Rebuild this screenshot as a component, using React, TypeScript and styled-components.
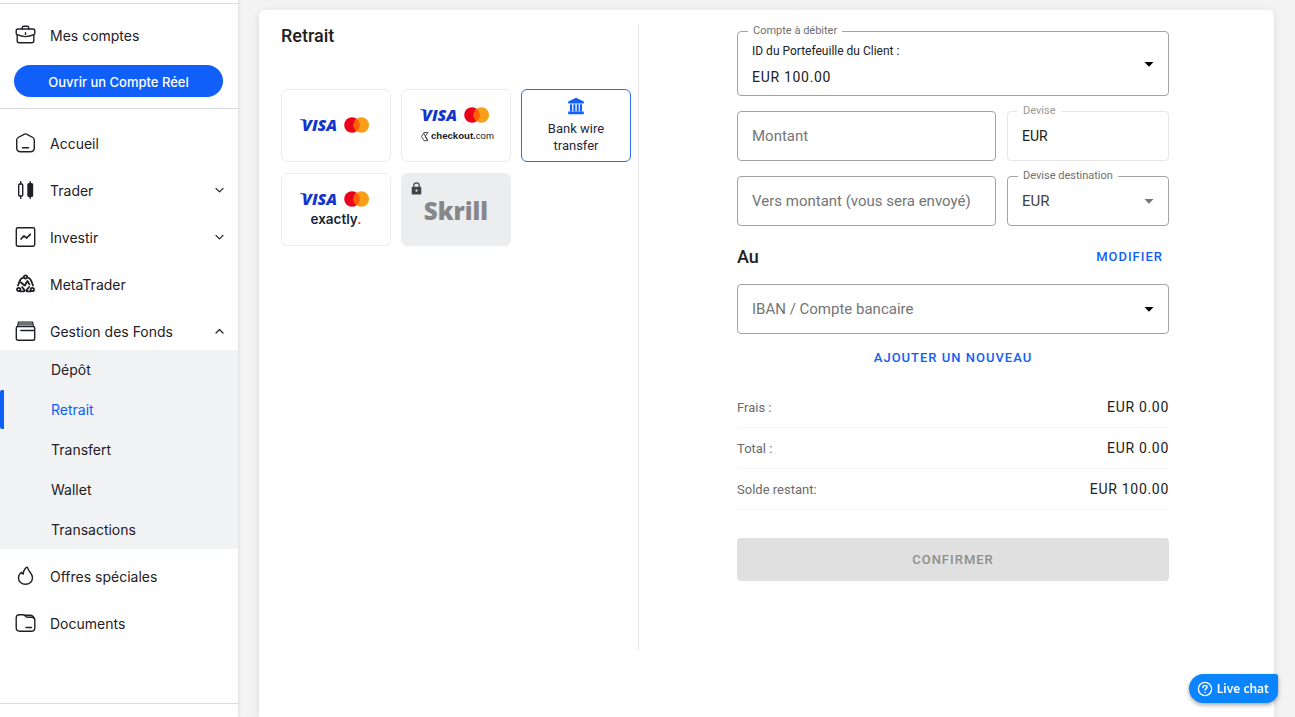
import React from "react";
import styled, { createGlobalStyle, css } from "styled-components";

const GlobalStyle = createGlobalStyle`
  *, *::before, *::after { box-sizing: border-box; }
  body {
    margin: 0;
    background: #f3f3f4;
    color: #212121;
    font-family: Roboto, "Liberation Sans", sans-serif;
    font-size: 14px;
  }
  button, input, select { font: inherit; color: inherit; }
  button { cursor: pointer; }
  ul { list-style: none; margin: 0; padding: 0; }
`;

const Page = styled.div`
  display: flex;
  min-height: 100vh;
`;

/* ---------- Sidebar ---------- */

const Sidebar = styled.aside`
  flex: 0 0 238px;
  display: flex;
  flex-direction: column;
  padding-top: 3px;
  background: #fff;
  box-shadow: 0 0 4px rgba(0, 0, 0, 0.14);
  color: #1f2025;
  font-family: Inter, "Liberation Sans", sans-serif;
`;

const AccountPanel = styled.section`
  display: flex;
  flex-direction: column;
  gap: 11px;
  padding: 12px 0 11px;
  border-top: 1px solid #dcdcde;
  border-bottom: 1px solid #d9dade;
`;

const NavLink = styled.a`
  display: flex;
  align-items: center;
  height: 38px;
  padding: 0 12px 0 15px;
  gap: 14px;
  color: inherit;
  font-size: 14px;
  text-decoration: none;

  span { flex: 1; }
`;

const OpenAccountButton = styled.button`
  height: 32px;
  margin: 0 15px 0 14px;
  padding: 2px 0 0;
  border: 0;
  border-radius: 16px;
  background: #0f5ff8;
  color: #fff;
  font-size: 13px;
  font-weight: 500;
`;

const Nav = styled.nav`
  flex: 1;
  display: flex;
  flex-direction: column;
  gap: 8px;
  padding-top: 15px;
`;

const NavList = styled.ul`
  display: flex;
  flex-direction: column;
  gap: 9px;
`;

const SubList = styled.ul`
  display: flex;
  flex-direction: column;
  gap: 1px;
  background: #f1f2f4;
`;

const SubLink = styled.a<{ $active?: boolean }>`
  display: flex;
  align-items: center;
  height: 39px;
  padding-left: 47px;
  border-left: 4px solid transparent;
  color: inherit;
  font-size: 14px;
  text-decoration: none;
  ${(p) =>
    p.$active &&
    css`
      border-left-color: #0f5ff8;
      border-radius: 2px;
      color: #0f5ff8;
    `}
`;

const SidebarFooter = styled.footer`
  height: 14px;
  border-top: 1px solid #d9dade;
`;

/* ---------- Main card ---------- */

const Main = styled.main`
  flex: 1;
  display: flex;
  min-width: 0;
  padding: 10px 21px 0;
`;

const Card = styled.div`
  flex: 1;
  display: flex;
  align-items: flex-start;
  min-width: 0;
  border-radius: 6px 6px 0 0;
  background: #fff;
  box-shadow: 0 2px 8px rgba(0, 0, 0, 0.1);
`;

const Methods = styled.section`
  flex: 0 0 380px;
  min-height: 626px;
  margin-top: 14px;
  padding: 0 7px 0 22px;
  border-right: 1px solid #e6e6e8;
`;

const Title = styled.h1`
  margin: 0 0 41px;
  font-size: 18px;
  font-weight: 500;
  line-height: 24px;
`;

const TileGrid = styled.div`
  display: grid;
  grid-template-columns: repeat(3, 1fr);
  gap: 11px 10px;
`;

const Tile = styled.button<{ $selected?: boolean }>`
  position: relative;
  display: flex;
  flex-direction: column;
  align-items: center;
  justify-content: center;
  height: 73px;
  padding: 0;
  border: 1px solid ${(p) => (p.$selected ? "#2b6cf3" : "#ececee")};
  border-radius: 6px;
  background: #fff;
  color: #25283a;
  font-size: 13px;
  line-height: 17px;

  &:disabled {
    border-color: #ecedef;
    background: #ecedef;
    cursor: default;
  }
`;

const TileText = styled.span`
  width: 70px;
  margin-top: 5px;
`;

const LockBadge = styled.span`
  position: absolute;
  top: 8px;
  left: 9px;
  display: flex;
`;

/* ---------- Form ---------- */

const FormArea = styled.section`
  flex: 1;
  display: flex;
  justify-content: center;
  min-width: 0;
  padding: 21px 7px 32px 0;
`;

const Form = styled.form`
  flex: 0 1 432px;
  min-width: 0;
`;

const FieldGrid = styled.div`
  display: grid;
  grid-template-columns: minmax(0, 1fr) 162px;
  gap: 15px 11px;
`;

const Field = styled.div<{ $wide?: boolean; $tall?: boolean; $muted?: boolean }>`
  position: relative;
  display: flex;
  height: ${(p) => (p.$tall ? 65 : 50)}px;
  border: 1px solid ${(p) => (p.$muted ? "#e6e6e6" : "#a3a3a3")};
  border-radius: 4px;
  ${(p) => p.$wide && "grid-column: 1 / -1;"}
`;

const FloatingLabel = styled.label<{ $muted?: boolean }>`
  position: absolute;
  top: -8px;
  left: 10px;
  padding: 0 5px;
  background: #fff;
  color: ${(p) => (p.$muted ? "#999" : "#6f6f6f")};
  font-size: 11px;
  line-height: 14px;
`;

const control = css`
  flex: 1;
  width: 100%;
  min-width: 0;
  padding: 0 14px 1px;
  border: 0;
  border-radius: 4px;
  background: transparent;
`;

const TextInput = styled.input`
  ${control}
  font-size: 15px;

  &::placeholder { color: #757575; opacity: 1; }
`;

const CodeInput = styled.input`
  ${control}
  color: #212121;
`;

const Select = styled.select<{ $placeholder?: boolean }>`
  ${control}
  appearance: none;
  color: ${(p) => (p.$placeholder ? "#757575" : "#424242")};
  font-size: 15px;
`;

const WalletButton = styled.button`
  ${control}
  display: flex;
  flex-direction: column;
  align-items: flex-start;
  justify-content: center;
  gap: 9px;
  padding-top: 2px;
  text-align: left;
`;

const WalletCaption = styled.span`
  font-size: 12px;
  line-height: 16px;
`;

const Amount = styled.span`
  color: #212121;
  font-size: 14px;
  line-height: 18px;
  letter-spacing: 0.05em;
`;

const Arrow = styled.span<{ $soft?: boolean }>`
  position: absolute;
  top: 0;
  right: 12px;
  bottom: 0;
  display: flex;
  align-items: center;
  color: ${(p) => (p.$soft ? "#757575" : "#000")};
  pointer-events: none;
`;

const SectionHead = styled.div`
  display: flex;
  align-items: center;
  justify-content: space-between;
  height: 32px;
  margin: 14px 0 12px;
`;

const SectionTitle = styled.h2`
  margin: 0;
  font-size: 18px;
  font-weight: 500;
`;

const TextButton = styled.button`
  height: 32px;
  padding: 0 6px;
  border: 0;
  background: transparent;
  color: #0f5ff8;
  font-size: 13px;
  font-weight: 500;
  letter-spacing: 1px;
`;

const AddRow = styled.div`
  display: flex;
  justify-content: center;
  margin: 7px 0 14px;
`;

const Summary = styled.dl`
  margin: 0 0 28px;
`;

const SummaryRow = styled.div`
  display: flex;
  align-items: center;
  justify-content: space-between;
  height: 41px;
  border-bottom: 1px solid #f5f5f5;

  dt { color: #6b6b6b; font-size: 13px; }
  dd { margin: 0; }
`;

const ConfirmButton = styled.button`
  width: 100%;
  height: 43px;
  border: 0;
  border-radius: 4px;
  background: #e0e0e0;
  color: #8f8f8f;
  font-size: 13px;
  font-weight: 500;
  letter-spacing: 1px;
`;

const ChatButton = styled.button`
  position: fixed;
  right: 17px;
  bottom: 14px;
  display: flex;
  align-items: center;
  gap: 4px;
  height: 29px;
  padding: 0 9px 0 8px;
  border: 0;
  border-radius: 15px 2px 12px 15px;
  background: #0a84ff;
  box-shadow: 0 2px 4px rgba(0, 0, 0, 0.35);
  color: #fff;
  font-family: "Noto Sans", sans-serif;
  font-size: 12px;
  font-weight: 600;
`;

/* ---------- Icons ---------- */

const LineSvg = styled.svg`
  flex: none;
  width: 21px;
  height: 22px;
  fill: none;
  stroke: #1f2025;
  stroke-width: 1.4;
  stroke-linecap: round;
  stroke-linejoin: round;
`;

const Icon = ({ children }: { children: React.ReactNode }) => (
  <LineSvg viewBox="0 0 21 22" aria-hidden="true">{children}</LineSvg>
);

const BriefcaseIcon = () => (
  <Icon>
    <path d="M7.2 5V3.8q0-1.6 1.6-1.6h3.4q1.6 0 1.6 1.6V5" />
    <path d="M3 5h15q1.8 0 1.8 1.8v2.4q0 1-1 1.5Q10.500 14.500 2.200 10.700q-1-.5-1-1.500V6.800Q1.200 5 3 5z" />
    <path d="M2.200 11v5.800q0 2 2 2h12.600q2 0 2-2V11M10.500 8.800v1.600" />
  </Icon>
);

const HomeIcon = () => (
  <Icon>
    <path d="M9 2.300 3.200 5.500Q1.700 6.400 1.700 8.200v7.600q0 4 4 4h9.600q4 0 4-4V8.200q0-1.800-1.500-2.700L12 2.300q-1.500-.8-3 0zM7.500 15.700h6" />
  </Icon>
);

const CandlesIcon = () => (
  <Icon>
    <rect x="3.700" y="5" width="4" height="12" rx="1" />
    <path d="M5.700 2.600V5M5.700 17v2.400M15.200 2.600V5M15.200 17v2.400" />
    <rect x="13" y="4.600" width="4.500" height="12.800" rx="1" fill="#1f2025" />
  </Icon>
);

const ChartIcon = () => (
  <Icon>
    <rect x="1.300" y="1.800" width="18.400" height="18.400" rx="1.600" />
    <path d="m6 13 3-3.200 2.700 2.200 3.600-3.600" strokeWidth="1.700" />
  </Icon>
);

const NetworkIcon = () => (
  <Icon>
    <g strokeWidth="1.800">
      <circle cx="10.500" cy="4" r="1.700" />
      <circle cx="3.700" cy="16.500" r="1.700" />
      <circle cx="17.300" cy="16.500" r="1.700" />
      <path d="M8.400 4.500Q5 5.500 4.300 9.200L3 12.500M12.600 4.500q3.400 1 4.100 4.700l1.300 3.300M5.600 18.400h3.200q1.400-.4.300-1.800l-2-2.500M15.400 18.400h-3.200q-1.400-.4-.3-1.800l2.300-2.600M6 9.500l3.300 2.800q1.200.3 1.200-1l2-3.300 1.900 3.400" />
    </g>
  </Icon>
);

const FundsIcon = () => (
  <Icon>
    <path d="M3.600 2h13.800l.8 4.200H2.800z" fill="#bfc0c4" stroke="none" />
    <path d="M3.200 4V2h14.600v2M2.400 6.300l.6-2.300h15l.6 2.300" strokeWidth="1.100" />
    <path d="M1.300 8q0-1.500 1.500-1.500h15.400q1.500 0 1.500 1.500v10.400q0 1.800-1.800 1.800H3.100q-1.800 0-1.800-1.800zM5.800 10.500h13.400" />
  </Icon>
);

const FlameIcon = () => (
  <Icon>
    <path d="M11.200 2.500C9.500 4.200 8 6 8.300 9 7.400 9 6.800 8.300 6.600 7.300 4.600 8.700 3.500 10.500 3.500 12.700c0 3.900 3.100 6.500 7 6.500s7-2.600 7-6.500c0-4.500-4.300-6.200-4.800-9.800q-.3-1.400-1.500-.4z" />
  </Icon>
);

const FolderIcon = () => (
  <Icon>
    <path d="M1.200 15.500V6q0-3.300 3.300-3.300h3.300q1.300 0 2.200 1l1.200 1q.5.500 1.500.5h4.600q2.500 0 2.500 3v7.500q0 3.500-3.500 3.500H4.700q-3.500 0-3.500-3.700z" />
    <path d="M9.700 3.300h5.200q3.500 0 4 3M11 15.500h5.500" />
  </Icon>
);

const ChevronSvg = styled.svg`
  width: 13px;
  height: 10px;
  fill: none;
  stroke: #1f2025;
  stroke-width: 1.2;
  stroke-linecap: round;
  stroke-linejoin: round;
`;

const Chevron = ({ up }: { up?: boolean }) => (
  <ChevronSvg viewBox="0 0 13 10" aria-hidden="true">
    <path d={up ? "M3 7l3.500-3.500L10 7" : "M3 3.300l3.500 3.500L10 3.300"} />
  </ChevronSvg>
);

const Caret = () => (
  <svg width="14" height="8" viewBox="0 0 14 8" aria-hidden="true">
    <path d="M2.500 2h9L7 6.800z" fill="currentColor" />
  </svg>
);

const CardLogos = () => (
  <svg width="76" height="24" viewBox="0 0 76 24" role="img" aria-label="Visa, Mastercard">
    <path d="M2 5.200h5l1.400 3.400Q6 6.500 2 5.800z" fill="#1434cb" />
    <text x="4" y="17" fill="#1434cb" fontFamily="Open Sans, sans-serif" fontSize="16" fontWeight="800" fontStyle="italic">VISA</text>
    <circle cx="54" cy="11" r="7.800" fill="#eb001b" />
    <circle cx="63.300" cy="11" r="7.800" fill="#f79e1b" />
    <path d="M58.650 4.740a7.800 7.800 0 0 1 0 12.520a7.800 7.800 0 0 1 0-12.520z" fill="#ff5f00" />
  </svg>
);

const CheckoutLogo = () => (
  <svg width="76" height="20" viewBox="0 0 76 20" role="img" aria-label="checkout.com">
    <path d="M9.800 4.500H6L3.500 8.500 6 12.700h3.800M5.600 5l4 7M9.800 4.500 7.300 8.500l2.500 4.200" fill="none" stroke="#222" strokeWidth=".8" />
    <text x="13" y="11" fill="#16181c" fontFamily="Liberation Sans, sans-serif" fontSize="9.600" fontWeight="700">
      checkout.<tspan fontWeight="400">com</tspan>
    </text>
  </svg>
);

const ExactlyLogo = () => (
  <svg width="60" height="20" viewBox="0 0 60 20" role="img" aria-label="exactly.">
    <text x="30" y="12" textAnchor="middle" fill="#18243a" fontFamily="Inter, sans-serif" fontSize="13.500" fontWeight="600">
      exactly<tspan fill="#f0402e">.</tspan>
    </text>
  </svg>
);

const SkrillLogo = () => (
  <svg width="74" height="36" viewBox="0 0 74 36" role="img" aria-label="Skrill">
    <text x="37" y="28" textAnchor="middle" fill="#86878a" fontFamily="Open Sans, sans-serif" fontSize="24" fontWeight="800">Skrill</text>
  </svg>
);

const LockIcon = () => (
  <svg width="11" height="13" viewBox="0 0 11 13" aria-hidden="true">
    <path d="M2.800 5V3.600a2.700 2.700 0 0 1 5.400 0V5" fill="none" stroke="#444" strokeWidth="1.200" />
    <rect x=".7" y="4.800" width="9.600" height="7.600" rx="1" fill="#444" />
    <circle cx="5.500" cy="8.600" r="1.100" fill="#ecedef" />
  </svg>
);

const BankIcon = () => (
  <svg width="18" height="18" viewBox="0 0 18 18" aria-hidden="true">
    <path d="M9 .8 16.800 4.500v2H1.200v-2zM3 7.200h2.200v7H3zM6.400 7.200h2v7h-2zM9.700 7.200h2v7h-2zM12.800 7.200H15v7h-2.200zM1.200 14.600h15.600v2.600H1.200z" fill="#0f5ff8" />
  </svg>
);

const HelpIcon = () => (
  <svg width="16" height="16" viewBox="0 0 16 16" aria-hidden="true" fill="none" stroke="#fff" strokeLinecap="round">
    <circle cx="8" cy="8" r="6.600" strokeWidth="1.300" />
    <path d="M6 6.500q0-1.900 2-1.900t2 1.700c0 1.400-2 1.400-2 2.800M8 11.400v.2" strokeWidth="1.500" />
  </svg>
);

/* ---------- Data ---------- */

const subItems = ["Dépôt", "Retrait", "Transfert", "Wallet", "Transactions"];

const summary = [
  { label: "Frais :", value: "EUR 0.00" },
  { label: "Total :", value: "EUR 0.00" },
  { label: "Solde restant:", value: "EUR 100.00" },
];

type ItemProps = {
  icon: React.ReactNode;
  label: string;
  chevron?: "up" | "down";
  children?: React.ReactNode;
};

const NavItem = ({ icon, label, chevron, children }: ItemProps) => (
  <li>
    <NavLink href="#">
      {icon}
      <span>{label}</span>
      {chevron && <Chevron up={chevron === "up"} />}
    </NavLink>
    {children}
  </li>
);

export default function App() {
  return (
    <>
      <GlobalStyle />
      <Page>
        <Sidebar>
          <AccountPanel>
            <NavLink href="#">
              <BriefcaseIcon />
              <span>Mes comptes</span>
            </NavLink>
            <OpenAccountButton type="button">Ouvrir un Compte Réel</OpenAccountButton>
          </AccountPanel>
          <Nav>
            <NavList>
              <NavItem icon={<HomeIcon />} label="Accueil" />
              <NavItem icon={<CandlesIcon />} label="Trader" chevron="down" />
              <NavItem icon={<ChartIcon />} label="Investir" chevron="down" />
              <NavItem icon={<NetworkIcon />} label="MetaTrader" />
              <NavItem icon={<FundsIcon />} label="Gestion des Fonds" chevron="up">
                <SubList>
                  {subItems.map((item) => (
                    <li key={item}>
                      <SubLink href="#" $active={item === "Retrait"}>{item}</SubLink>
                    </li>
                  ))}
                </SubList>
              </NavItem>
            </NavList>
            <NavList>
              <NavItem icon={<FlameIcon />} label="Offres spéciales" />
              <NavItem icon={<FolderIcon />} label="Documents" />
            </NavList>
          </Nav>
          <SidebarFooter />
        </Sidebar>

        <Main>
          <Card>
            <Methods>
              <Title>Retrait</Title>
              <TileGrid>
                <Tile type="button"><CardLogos /></Tile>
                <Tile type="button"><CardLogos /><CheckoutLogo /></Tile>
                <Tile type="button" $selected>
                  <BankIcon />
                  <TileText>Bank wire transfer</TileText>
                </Tile>
                <Tile type="button"><CardLogos /><ExactlyLogo /></Tile>
                <Tile type="button" disabled>
                  <LockBadge><LockIcon /></LockBadge>
                  <SkrillLogo />
                </Tile>
              </TileGrid>
            </Methods>

            <FormArea>
              <Form>
                <FieldGrid>
                  <Field $wide $tall>
                    <FloatingLabel htmlFor="wallet">Compte à débiter</FloatingLabel>
                    <WalletButton id="wallet" type="button" aria-haspopup="listbox">
                      <WalletCaption>ID du Portefeuille du Client :</WalletCaption>
                      <Amount>EUR 100.00</Amount>
                    </WalletButton>
                    <Arrow><Caret /></Arrow>
                  </Field>
                  <Field>
                    <TextInput aria-label="Montant" placeholder="Montant" />
                  </Field>
                  <Field $muted>
                    <FloatingLabel htmlFor="currency" $muted>Devise</FloatingLabel>
                    <CodeInput id="currency" value="EUR" readOnly />
                  </Field>
                  <Field>
                    <TextInput
                      aria-label="Vers montant (vous sera envoyé)"
                      placeholder="Vers montant (vous sera envoyé)"
                    />
                  </Field>
                  <Field>
                    <FloatingLabel htmlFor="target">Devise destination</FloatingLabel>
                    <Select id="target" defaultValue="EUR">
                      <option>EUR</option>
                    </Select>
                    <Arrow $soft><Caret /></Arrow>
                  </Field>
                </FieldGrid>

                <SectionHead>
                  <SectionTitle>Au</SectionTitle>
                  <TextButton type="button">MODIFIER</TextButton>
                </SectionHead>
                <Field>
                  <Select aria-label="IBAN / Compte bancaire" $placeholder>
                    <option>IBAN / Compte bancaire</option>
                  </Select>
                  <Arrow><Caret /></Arrow>
                </Field>
                <AddRow>
                  <TextButton type="button">AJOUTER UN NOUVEAU</TextButton>
                </AddRow>

                <Summary>
                  {summary.map((row) => (
                    <SummaryRow key={row.label}>
                      <dt>{row.label}</dt>
                      <dd><Amount>{row.value}</Amount></dd>
                    </SummaryRow>
                  ))}
                </Summary>
                <ConfirmButton type="submit" disabled>CONFIRMER</ConfirmButton>
              </Form>
            </FormArea>
          </Card>
        </Main>
      </Page>
      <ChatButton type="button">
        <HelpIcon />
        Live chat
      </ChatButton>
    </>
  );
}
